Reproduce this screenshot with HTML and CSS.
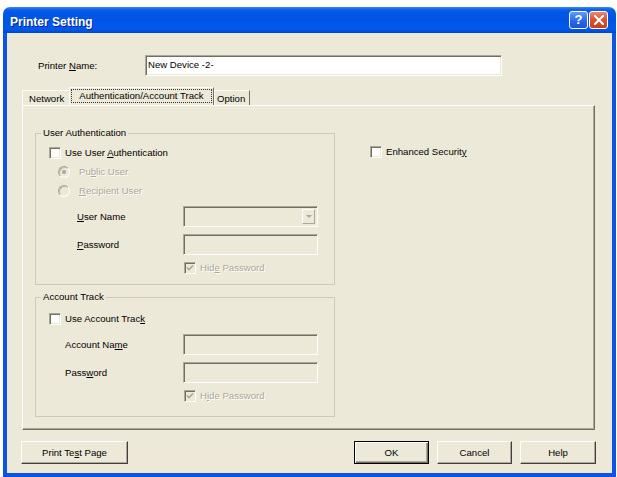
FILE: index.html
```html
<!DOCTYPE html>
<html lang="en">
<head>
    <meta charset="UTF-8">
    <title>Printer Setting</title>
    <link rel="stylesheet" href="styles.css">
</head>
<body>
    <div class="window">
        <div class="titlebar">
            <span class="title">Printer Setting</span>
            <div class="title-btns">
                <span class="tbtn help-btn">?</span>
                <span class="tbtn close-btn">
                    <svg width="10" height="10" viewBox="0 0 10 10"><path d="M1 1 L9 9 M9 1 L1 9" stroke="#fff" stroke-width="2" stroke-linecap="square"/></svg>
                </span>
            </div>
        </div>

        <div class="frame">
            <div class="name-row">
                <label class="name-label">Printer <u>N</u>ame:</label>
                <div class="textbox">New Device -2-</div>
            </div>

            <div class="tabs">
                <div class="tab first">Network</div>
                <div class="tab active"><span class="focus">Authentication/Account Track</span></div>
                <div class="tab last">Option</div>
            </div>

            <div class="panel">
                <div class="col-left">
                    <fieldset class="group auth">
                        <legend>User Authentication</legend>
                        <div class="check-row">
                            <span class="cb"></span>
                            <span class="cb-text">Use User <u>A</u>uthentication</span>
                        </div>
                        <div class="check-row radio-row">
                            <span class="rb"><span class="dot"></span></span>
                            <span class="rb-text off">Pu<u>b</u>lic User</span>
                        </div>
                        <div class="check-row radio-row">
                            <span class="rb"></span>
                            <span class="rb-text off"><u>R</u>ecipient User</span>
                        </div>
                        <div class="field-row">
                            <label class="field-label"><u>U</u>ser Name</label>
                            <div class="input combo"><span class="combo-btn"><span class="arrow"></span></span></div>
                        </div>
                        <div class="field-row">
                            <label class="field-label"><u>P</u>assword</label>
                            <div class="input"></div>
                        </div>
                        <div class="check-row hide-row">
                            <span class="cb off">
                                <svg width="8" height="8" viewBox="0 0 8 8"><path d="M1 3.5 L3 5.5 L7 1.5" fill="none" stroke="#aca899" stroke-width="1.7"/></svg>
                            </span>
                            <span class="cb-text off">Hid<u>e</u> Password</span>
                        </div>
                    </fieldset>

                    <fieldset class="group account">
                        <legend>Account Track</legend>
                        <div class="check-row">
                            <span class="cb"></span>
                            <span class="cb-text">Use Account Trac<u>k</u></span>
                        </div>
                        <div class="field-row">
                            <label class="field-label">Account Na<u>m</u>e</label>
                            <div class="input"></div>
                        </div>
                        <div class="field-row">
                            <label class="field-label">Pass<u>w</u>ord</label>
                            <div class="input"></div>
                        </div>
                        <div class="check-row hide-row">
                            <span class="cb off">
                                <svg width="8" height="8" viewBox="0 0 8 8"><path d="M1 3.5 L3 5.5 L7 1.5" fill="none" stroke="#aca899" stroke-width="1.7"/></svg>
                            </span>
                            <span class="cb-text off">H<u>i</u>de Password</span>
                        </div>
                    </fieldset>
                </div>

                <div class="col-right">
                    <div class="check-row">
                        <span class="cb"></span>
                        <span class="cb-text">Enhanced Securit<u>y</u></span>
                    </div>
                </div>
            </div>

            <div class="buttons">
                <button class="btn wide">Print Te<u>s</u>t Page</button>
                <button class="btn default">OK</button>
                <button class="btn">Cancel</button>
                <button class="btn help">Help</button>
            </div>
        </div>
    </div>
</body>
</html>
```

FILE: styles.css
```css
body {
    margin: 0;
    background-color: #fff;
    font-family: "Liberation Sans", Arial, sans-serif;
    font-size: 9.6px;
    line-height: 12px;
    color: #000;
}

u {
    text-decoration-thickness: 1px;
    text-underline-offset: 1px;
}

.window {
    margin: 7px 0 0 3px;
    width: 613px;
}

/* title bar */
.titlebar {
    height: 26px;
    box-sizing: border-box;
    padding: 0 8px 0 7px;
    display: flex;
    align-items: flex-start;
    border-radius: 7px 7px 0 0;
    background: linear-gradient(to bottom, #3d8cf6 0px, #1466ec 2px, #0057e6 5px, #0054e3 50%, #0059ee 85%, #0046c8 100%);
}

.title {
    flex: 1;
    margin-top: 8px;
    font-size: 12px;
    line-height: 14px;
    font-weight: bold;
    color: #fff;
    text-shadow: 1px 1px 0 #0b2590;
}

.title-btns {
    display: flex;
    gap: 1px;
    margin-top: 4px;
}

.tbtn {
    width: 19px;
    height: 18px;
    box-sizing: border-box;
    border: 1px solid #fff;
    border-radius: 3px;
    display: flex;
    align-items: center;
    justify-content: center;
}

.help-btn {
    background: linear-gradient(to bottom, #5d9cf8, #2865e6 60%, #1c55d8);
    color: #fff;
    font-weight: bold;
    font-size: 13px;
}

.close-btn {
    background: linear-gradient(to bottom, #ec8a6e, #dc5634 45%, #c83f1a);
}

/* dialog body */
.frame {
    height: 418px;
    padding: 22px 17px 0 15px;
    border: 4px solid #0b55e2;
    border-top: 0;
    background-color: #ece9d8;
}

.name-row {
    display: flex;
    align-items: center;
    height: 21px;
}

.name-label {
    width: 107px;
    margin-left: 16px;
    box-sizing: border-box;
}

.textbox,
.input {
    box-sizing: border-box;
    height: 21px;
    border: 1px solid;
    border-color: #aca899 #fff #fff #aca899;
    box-shadow: inset 1px 1px 0 #716f64, inset -1px -1px 0 #ece9d8;
}

.textbox {
    width: 357px;
    background-color: #fff;
    padding: 3px 0 0 2px;
}

.input {
    width: 135px;
    background-color: #ece9d8;
}

/* tabs */
.tabs {
    display: flex;
    align-items: flex-end;
    height: 18px;
    margin-top: 11px;
}

.tab {
    height: 15px;
    box-sizing: border-box;
    padding: 2px 6px 0 6px;
    border-top: 1px solid #fff;
    border-left: 1px solid #fff;
    border-right: 1px solid #716f64;
}

.tab.first {
    width: 47px;
    border-right: 0;
}

.tab.active {
    height: 18px;
    padding: 1px 0 0 1px;
    width: 145px;
}

.tab.last {
    width: 36px;
    padding-left: 2px;
}

.focus {
    display: block;
    width: 141px;
    height: 14px;
    box-sizing: border-box;
    border: 1px dotted #333;
    text-align: center;
    line-height: 12px;
    white-space: nowrap;
}

.panel {
    height: 325px;
    box-sizing: border-box;
    padding: 21px 0 0 12px;
    display: flex;
    border: 1px solid;
    border-color: #fff #716f64 #716f64 #fff;
    box-shadow: inset -1px -1px 0 #aca899;
}

.col-left {
    width: 300px;
    display: flex;
    flex-direction: column;
    gap: 6px;
}

.col-right {
    margin-left: 35px;
    padding-top: 15px;
}

/* group boxes */
.group {
    margin: 0;
    min-width: 0;
    border: 1px solid #cdcab9;
}

.group.auth {
    padding: 4px 0 7px 13px;
}

.group.account {
    padding: 6px 0 11px 13px;
}

.group legend {
    margin-left: -8px;
    padding: 0 2px;
    line-height: 12px;
}

.check-row {
    display: flex;
    align-items: center;
    height: 19px;
}

.radio-row {
    padding-left: 9px;
}

.hide-row {
    margin-top: 3px;
    padding-left: 135px;
}

.field-row {
    display: flex;
    align-items: center;
    margin-top: 6px;
}

.field-row + .field-row {
    margin-top: 7px;
}

.auth .field-row {
    padding-left: 28px;
}

.auth .field-label {
    width: 106px;
}

.account .field-row {
    padding-left: 16px;
}

.account .field-label {
    width: 118px;
}

/* check boxes and radios */
.cb {
    flex: none;
    width: 12px;
    height: 12px;
    box-sizing: border-box;
    border: 1px solid;
    border-color: #aca899 #fff #fff #aca899;
    box-shadow: inset 1px 1px 0 #716f64, inset -1px -1px 0 #ece9d8;
    background-color: #fff;
    display: flex;
    align-items: center;
    justify-content: center;
}

.cb.off {
    background-color: #ece9d8;
}

.cb-text {
    margin-left: 4px;
}

.rb {
    flex: none;
    width: 12px;
    height: 12px;
    box-sizing: border-box;
    border-radius: 50%;
    border: 1px solid;
    border-color: #aca899 #fff #fff #aca899;
    box-shadow: inset 1px 1px 0 #bdb9a8;
    background-color: #ece9d8;
    display: flex;
    align-items: center;
    justify-content: center;
}

.dot {
    width: 4px;
    height: 4px;
    border-radius: 50%;
    background-color: #aca899;
}

.rb-text {
    margin-left: 9px;
}

.off {
    color: #aca899;
    text-shadow: 1px 1px 0 #fff;
}

/* combo box */
.combo {
    display: flex;
    justify-content: flex-end;
    padding: 2px;
}

.combo-btn {
    width: 13px;
    box-sizing: border-box;
    border: 1px solid;
    border-color: #fff #aca899 #aca899 #fff;
    background-color: #ece9d8;
    display: flex;
    align-items: center;
    justify-content: center;
}

.arrow {
    width: 0;
    height: 0;
    border-left: 3px solid transparent;
    border-right: 3px solid transparent;
    border-top: 3px solid #aca899;
}

/* bottom buttons */
.buttons {
    display: flex;
    margin: 11px -1px 0 0;
}

.btn {
    width: 75px;
    height: 23px;
    box-sizing: border-box;
    margin: 0 0 0 8px;
    padding: 0;
    font: inherit;
    color: #000;
    background-color: #ece9d8;
    border: 1px solid;
    border-color: #fff #404040 #404040 #fff;
    box-shadow: inset -1px -1px 0 #aca899;
}

.btn.wide {
    width: 107px;
    margin: 0 auto 0 -1px;
}

.btn.default {
    border-color: #000;
    box-shadow: inset 1px 1px 0 #fff, inset -1px -1px 0 #716f64, inset -2px -2px 0 #aca899;
}

.btn.help {
    width: 76px;
}
```
